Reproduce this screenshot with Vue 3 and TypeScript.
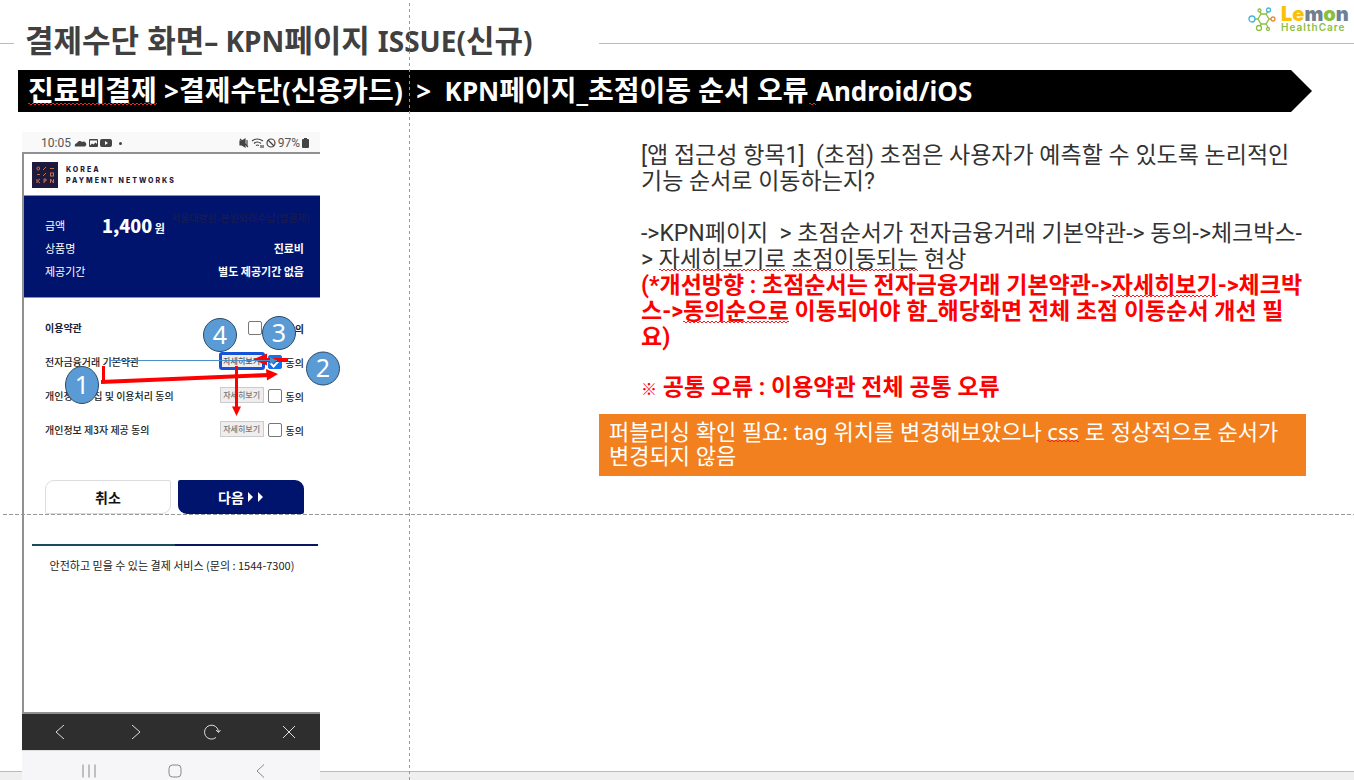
<script setup lang="ts">
import { ref } from 'vue'

interface Term {
  id: string
  title: string
  checked: boolean
  focused: boolean
}

const terms = ref<Term[]>([
  { id: 'finance', title: '전자금융거래 기본약관', checked: true, focused: true },
  { id: 'privacy', title: '개인정보 수집 및 이용처리 동의', checked: false, focused: false },
  { id: 'third', title: '개인정보 제3자 제공 동의', checked: false, focused: false },
])
const agreeAll = ref(false)
</script>

<template>
  <div class="slide">
    <header class="top">
      <span class="rule-left"></span>
      <h1>결제수단 화면<span class="latin">– KPN</span>페이지 <span class="latin">ISSUE(</span>신규<span class="latin">)</span></h1>
      <div class="brand">
        <svg class="molecule" width="30" height="26" viewBox="0 0 30 26" fill="none" stroke="#8cbf3f" stroke-width="1.3">
          <path d="M13 7l5 0 3 5-3 5h-5l-3-5zM13 7l-1-3M18 7l2-2M21 12h2M18 17l2 3M13 17l-1 2M10 12H7" />
          <circle cx="11.500" cy="3.500" r="1.500" /><circle cx="11" cy="21" r="2.500" /><circle cx="20" cy="22" r="1.500" />
          <circle cx="20.500" cy="3" r="2" stroke="#42b4e0" /><circle cx="4" cy="12" r="3" stroke="#42b4e0" />
          <circle cx="25" cy="12" r="2" stroke="#ed8a32" />
        </svg>
        <div class="wordmark">
          <span class="lemon"><i class="y">Le</i><i class="g">m</i><i class="l">o</i><i class="g">n</i></span>
          <span class="health">HealthCare</span>
        </div>
      </div>
    </header>

    <div class="banner">
      <h2><span class="typo">진료비결제</span> <span class="latin">&gt;</span>결제수단<span class="latin">(</span>신용카드<span class="latin">)&nbsp; &gt;&nbsp; KPN</span>페이지_초점이동 순서 오류<span class="typo">&nbsp;</span><span class="latin">Android/iOS</span></h2>
    </div>

    <main>
      <section class="phone">
        <div class="status">
          <span>10:05</span>
          <svg width="52" height="12" viewBox="0 0 52 12" fill="#444">
            <path d="M1 9.500a2.500 2.500 0 0 1 2-3.500 3 3 0 0 1 5-1 2.500 2.500 0 0 1 3 4.500z" />
            <path fill-rule="evenodd" d="M16 2h7q1 0 1 1v6q0 1-1 1h-7q-1 0-1-1V3q0-1 1-1zm0 1.500v5l2-2 1.500 1 2-2L23 7V3.500z" />
            <path fill-rule="evenodd" d="M28 2h8q2 0 2 2v4q0 2-2 2h-8q-2 0-2-2V4q0-2 2-2zm3 2v4l3-2z" />
            <circle cx="46.500" cy="6.500" r="1.500" />
          </svg>
          <span class="grow"></span>
          <svg width="38" height="12" viewBox="0 0 38 12" fill="none" stroke="#444" stroke-width="1.200">
            <path fill="#444" d="M1 4h2l3-2v8L3 8H1z" /><path d="M1 2l8 8M8 3v6" />
            <path d="M13 4q5-4 11 0M15 6.500q3.500-3 7 0M17 8.500q1.500-1 3 0M22 8v3M24 8v3" />
            <circle cx="32" cy="6" r="4" /><path d="M29 3l6 6" />
          </svg>
          <span class="pct">97%</span>
          <svg width="7" height="10" viewBox="0 0 7 10" fill="#444"><path d="M2 0h3v1h1q1 0 1 1v7q0 1-1 1H1q-1 0-1-1V2q0-1 1-1h1z" /></svg>
        </div>

        <div class="screen">
          <div class="kpn">
            <svg width="26" height="26" viewBox="0 0 26 26">
              <rect width="26" height="26" fill="#1e1a3e" />
              <g fill="none" stroke="#c9704a" stroke-width="1">
                <rect x="5" y="5" width="2.500" height="3" rx="1" /><path d="M11 8l3-3M18 6.500h4M5 12.500h3M11 14l3-3" />
                <rect x="18.500" y="11" width="3" height="3" />
                <path d="M5 17v4M8 17l-2.500 2L8 21M12 21v-4h2v2h-2M18.500 21v-4l3 4v-4" />
              </g>
            </svg>
            <p>KOREA<br />PAYMENT NETWORKS</p>
          </div>

          <dl class="summary">
            <div><dt>금액</dt><dd class="price"><b>1,400</b> 원</dd><dd class="faint">서울대병원-본원외래수납(앱결제)</dd></div>
            <div><dt>상품명</dt><dd class="val">진료비</dd></div>
            <div><dt>제공기간</dt><dd class="val">별도 제공기간 없음</dd></div>
          </dl>

          <div class="terms">
            <div class="row head">
              <span class="name">이용약관</span>
              <label><input v-model="agreeAll" type="checkbox" /><span>동의</span></label>
            </div>
            <div v-for="t in terms" :key="t.id" class="row">
              <span class="name">{{ t.title }}</span>
              <button type="button" class="more" :class="{ focused: t.focused }">자세히보기</button>
              <label><input v-model="t.checked" type="checkbox" /><span>동의</span></label>
            </div>
          </div>

          <div class="actions">
            <button type="button" class="cancel">취소</button>
            <button type="button" class="next">
              다음
              <svg width="17" height="10" viewBox="0 0 17 10" fill="#fff"><path d="M1 0l5 5-5 5zM11 0l5 5-5 5z" /></svg>
            </button>
          </div>
          <div class="divider"></div>
          <p class="contact">안전하고 믿을 수 있는 결제 서비스 (문의 : 1544-7300)</p>
        </div>

        <div class="toolbar">
          <button type="button" aria-label="Back"><svg width="16" height="16" viewBox="0 0 16 16"><path d="M12 1L4 8l8 7" /></svg></button>
          <button type="button" aria-label="Forward"><svg width="16" height="16" viewBox="0 0 16 16"><path d="M4 1l8 7-8 7" /></svg></button>
          <button type="button" aria-label="Reload"><svg width="18" height="16" viewBox="0 0 18 16"><path d="M13 13.500A7 7 0 1 1 15.500 8M13 6l2.500 2.500L17.500 6" /></svg></button>
          <button type="button" aria-label="Close"><svg width="16" height="16" viewBox="0 0 16 16"><path d="M2 2l12 12M14 2L2 14" /></svg></button>
        </div>
        <div class="softkeys">
          <button type="button" aria-label="Recents"><svg width="16" height="16" viewBox="0 0 16 16"><path d="M2 1.500v13M8 1.500v13M14 1.500v13" /></svg></button>
          <button type="button" aria-label="Home"><svg width="16" height="16" viewBox="0 0 16 16"><rect x="2" y="2" width="12" height="12" rx="3.500" /></svg></button>
          <button type="button" aria-label="Previous"><svg width="16" height="16" viewBox="0 0 16 16"><path d="M12 1.500L5 8l7 6.500" /></svg></button>
        </div>

        <svg class="marks" width="330" height="648" viewBox="22 132 330 648">
          <g fill="#f00" stroke="#f00">
            <path d="M103.500 366v17" stroke-width="3" /><path d="M101 382l168-7" stroke-width="4" /><path stroke="none" d="M266 369l12 5-11 6.500z" />
            <path d="M288 360h-24" stroke-width="4" /><path stroke="none" d="M253 359.500l14-6v12z" />
            <path d="M236.500 366v42" stroke-width="3" /><path stroke="none" d="M232 406.500h9l-4.500 9.500z" />
          </g>
          <path d="M111 360.500h166" stroke="#4a8fcc" />
          <path d="M270 357l7 3.500-7 3.500z" fill="#4a8fcc" />
          <g class="dots">
            <ellipse cx="82" cy="385" rx="16.500" ry="18.500" /><circle cx="323" cy="368.500" r="16.500" />
            <circle cx="279" cy="333" r="16.500" /><circle cx="220" cy="335" r="16.500" />
          </g>
          <g class="nums">
            <text x="82" y="394">1</text><text x="323" y="377">2</text><text x="279" y="342">3</text><text x="220" y="344">4</text>
          </g>
        </svg>
      </section>

      <section class="notes">
        <div class="text">
          <p>[앱 접근성 항목1]&nbsp; (초점) 초점은 사용자가 예측할 수 있도록 논리적인<br />기능 순서로 이동하는지?</p>
          <p class="flow">-&gt;KPN페이지&nbsp; &gt; 초점순서가 전자금융거래 기본약관-&gt; 동의-&gt;체크박스-<br />&gt; <span class="typo">자세히보기로</span> <span class="typo">초점이동되는</span> 현상</p>
          <p class="red">(*개선방향 : 초점순서는 전자금융거래 기본약관-&gt;<span class="typo">자세히보기</span>-&gt;체크박<br />스-&gt;<span class="typo">동의순으로</span> 이동되어야 함_해당화면 전체 초점 이동순서 개선 필<br />요)</p>
          <p class="red common"><span class="mark">※</span> 공통 오류 : 이용약관 전체 공통 오류</p>
        </div>
        <p class="callout">퍼블리싱 확인 필요: tag 위치를 변경해보았으나 <span class="typo">css</span> 로 정상적으로 순서가<br />변경되지 않음</p>
      </section>
    </main>

    <div class="base"></div>
    <div class="guide-v"></div>
    <div class="guide-h"></div>
  </div>
</template>

<style>
body { margin: 0; }
</style>

<style scoped>
* { box-sizing: border-box; }
h1, h2, p, dl, dd { margin: 0; }
button { font: inherit; cursor: pointer; }
.slide {
  position: relative;
  display: flex;
  flex-direction: column;
  min-height: 100vh;
  overflow: hidden;
  background: #fff;
  color: #333;
  font-family: "Noto Sans", "Noto Sans CJK KR", sans-serif;
}
.top { display: flex; align-items: flex-start; height: 70px; }
.rule-left { width: 14px; height: 44px; border-bottom: 1px solid #f5c400; }
h1 {
  width: 585px;
  padding: 18px 0 0 11px;
  color: #404040;
  font-size: 31px;
  line-height: 44px;
  white-space: nowrap;
}
h1 .latin { font-size: 28px; }
.brand {
  display: flex;
  flex: 1;
  justify-content: flex-end;
  gap: 3px;
  height: 44px;
  padding: 6px 3px 0 0;
  border-bottom: 1px solid #f5c400;
}
.molecule { margin-top: 1px; }
.wordmark { display: flex; flex-direction: column; width: 70px; font-family: Inter, sans-serif; }
.lemon { font-size: 20px; font-weight: 900; line-height: 16px; }
.lemon i { font-style: normal; }
.y { color: #fbc10a; }
.g { color: #6f8092; }
.l { color: #8cbf3f; }
.health { color: #8cbf3f; font-size: 10px; font-weight: 600; letter-spacing: 1px; line-height: 11px; }
.banner {
  height: 42px;
  margin: 0 42px 0 18px;
  padding-left: 10px;
  background: #000;
  color: #fff;
  clip-path: polygon(0 0, calc(100% - 21px) 0, 100% 50%, calc(100% - 21px) 100%, 0 100%);
}
h2 { font-size: 28px; line-height: 40px; white-space: nowrap; }
h2 .latin { font-size: 26px; }
.typo {
  --lift: 3px;
  background:
    linear-gradient(90deg, #e22 50%, transparent 50%) 0 calc(100% - var(--lift)) / 4px 1px repeat-x,
    linear-gradient(90deg, transparent 50%, #e22 50%) 0 calc(100% - var(--lift) + 1px) / 4px 1px repeat-x;
}
h2 .typo, .callout .typo { --lift: 5px; }

main { display: flex; flex: 1; padding-top: 20px; }
.phone {
  position: relative;
  z-index: 1;
  display: flex;
  flex-direction: column;
  flex: none;
  width: 298px;
  margin-left: 22px;
  font-family: "Noto Sans CJK KR", sans-serif;
  color: #222;
}
.status {
  display: flex;
  align-items: center;
  height: 20px;
  padding: 2px 11px 0 19px;
  background: #f9f9f9;
  color: #555;
  font: 12px Roboto, sans-serif;
}
.status svg { margin-left: 3px; }
.status .pct { margin-left: 1px; }
.status svg:last-child { margin-left: 2px; }
.grow { flex: 1; }
.screen { flex: 1; border: solid #8f9194; border-width: 2px 0 2px 2px; background: #fff; }
.kpn { display: flex; align-items: center; gap: 8px; height: 42px; border-bottom: 1px solid #8f9194; padding-left: 8px; }
.kpn p { color: #1e1a3e; font: 800 7px/11px Inter, sans-serif; letter-spacing: 2px; }
.summary {
  height: 102px;
  padding: 18px 16px 0 21px;
  background: #00146e;
  border-bottom: 1px solid #8f9194;
  color: #fff;
  font-size: 11px;
  line-height: 23px;
}
.summary div { display: flex; height: 23px; white-space: nowrap; }
dt { flex: none; width: 57px; }
.price { flex: none; width: 64px; font-size: 11px; font-weight: 700; }
.price b { font-size: 18px; line-height: 23px; }
.faint { flex: none; margin-left: 5px; color: #1b1c50; font-size: 10px; line-height: 8px; }
.val { flex: 1; text-align: right; font-weight: 700; }
.terms { padding: 12px 16px 0 21px; font-size: 10px; font-weight: 500; }
.row { display: flex; align-items: center; height: 34px; }
.name { flex: 1; white-space: nowrap; }
.head { font-weight: 700; color: #16213c; }
.head label { gap: 24px; }
label { display: flex; align-items: center; gap: 4px; }
.row label { padding-top: 2px; }
input {
  display: grid;
  place-items: center;
  width: 14px;
  height: 14px;
  margin: 0;
  appearance: none;
  border: 1px solid #777;
  border-radius: 2px;
  background: #fff;
}
input:checked { border-color: #0a75f5; background: #0a75f5; }
input:checked::before {
  content: "";
  width: 8px;
  height: 4px;
  border: solid #fff;
  border-width: 0 0 2px 2px;
  transform: rotate(-45deg);
}
.more {
  width: 44px;
  height: 16px;
  margin-right: 4px;
  padding: 0;
  border: 1px solid #ccc;
  background: #eee;
  color: #777;
  font-size: 8px;
  line-height: 12px;
  white-space: nowrap;
}
.more.focused { border-radius: 2px; outline: 3px solid #1553d8; outline-offset: -2px; color: #555; }
.actions { display: grid; grid-template-columns: 1fr 1fr; gap: 7px; margin-top: 34px; padding: 0 16px 0 21px; }
.actions button { display: flex; align-items: center; justify-content: center; gap: 3px; height: 34px; padding: 0; font-size: 14px; font-weight: 700; }
.cancel { border: 1px solid #ddd; border-radius: 9px 2px 9px 2px; background: #fff; color: #111; }
.next { border: 0; border-radius: 2px 9px 2px 9px; background: #00146e; color: #fff; }
.divider { height: 2px; margin: 30px 2px 0 8px; background: linear-gradient(90deg, #194c5c 50%, #0b1660 50%); }
.contact { padding: 10px 0 0; font-size: 11px; line-height: 18px; text-align: center; white-space: nowrap; }
.toolbar, .softkeys { display: flex; align-items: center; justify-content: space-between; }
.toolbar { height: 36px; padding: 0 23px 0 30px; background: #2e2e2e; }
.softkeys { height: 30px; padding: 10px 52px 0 59px; border-top: 1px solid #ddd; background: #f6f6f8; }
.toolbar button, .softkeys button { display: flex; padding: 0; border: 0; background: none; }
.toolbar svg { fill: none; stroke: #ddd; }
.softkeys svg { fill: none; stroke: #888; }
.marks { position: absolute; top: 0; left: 0; pointer-events: none; }
.dots { fill: #5b9bd5; stroke: #2b4a68; }
.nums { fill: #fff; font: 25px "Noto Sans", sans-serif; text-anchor: middle; }

.notes { flex: 1; min-width: 0; margin: 0 48px 0 279px; }
.text { padding: 11px 0 0 42px; color: #333; font-family: Roboto, "Noto Sans CJK KR", sans-serif; font-size: 23px; line-height: 26px; white-space: nowrap; }
.flow { margin-top: 26px; }
.red { color: #f00; font-weight: 700; }
.common { margin-top: 24px; }
.mark { font-size: 16px; }
.callout { margin-top: 11px; padding: 5px 10px 9px; background: #f3801e; color: #fff; font-size: 22px; line-height: 24px; white-space: nowrap; }

.base { position: absolute; inset: auto 0 0; height: 9px; border-top: 1px solid #bbb; background: #efefef; }
.guide-v { position: absolute; z-index: 2; top: 3px; bottom: 0; left: 409px; width: 1px; background: repeating-linear-gradient(#999 0 3px, transparent 3px 6px); }
.guide-h { position: absolute; z-index: 2; top: 514px; left: 3px; right: 0; height: 1px; background: repeating-linear-gradient(90deg, #999 0 4px, transparent 4px 6px); }
</style>
